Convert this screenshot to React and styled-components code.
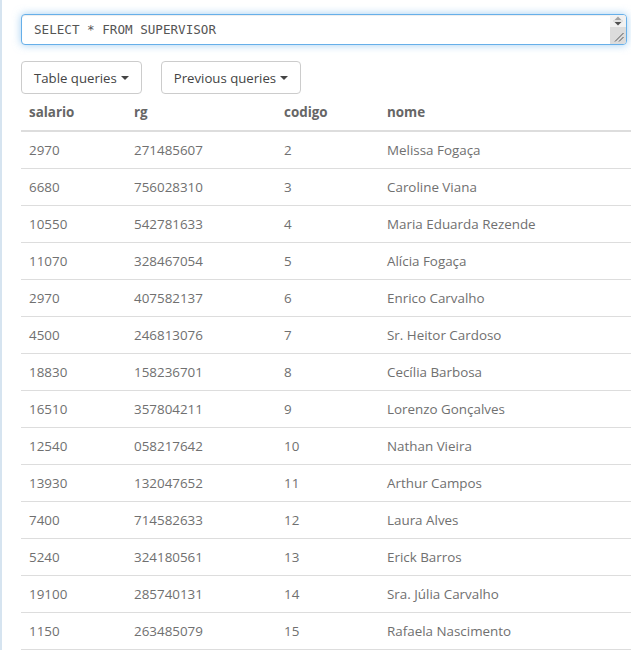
import styled, { createGlobalStyle } from "styled-components";

const GlobalStyle = createGlobalStyle`
  html, body {
    margin: 0;
    padding: 0;
    background: #fff;
    overflow: hidden;
  }
  body {
    font-family: "Open Sans", "DejaVu Sans", sans-serif;
    font-size: 13.4px;
    color: #6f6f6f;
  }
`;

/* 왼쪽 경계선이 있는 전체 영역 */
const Page = styled.div`
  min-height: 650px;
  border-left: 2px solid #d6e4f0;
  padding: 14px 0 0 19px;
  box-sizing: border-box;
`;

const Content = styled.div`
  width: 606px;
`;

const QueryWrap = styled.div`
  position: relative;
`;

/* SQL 입력창 */
const QueryBox = styled.textarea`
  display: block;
  width: 100%;
  height: 31px;
  box-sizing: border-box;
  padding: 5px 30px 5px 12px;
  font-family: "DejaVu Sans Mono", "Liberation Mono", monospace;
  font-size: 12.6px;
  line-height: 20px;
  color: #555;
  background: #fff;
  border: 1px solid #66afe9;
  border-radius: 4px;
  outline: none;
  box-shadow: inset 0 1px 1px rgba(0, 0, 0, 0.075),
    0 0 8px rgba(102, 175, 233, 0.6);
  overflow: hidden;
  resize: none;
`;

/* 스크롤바 모양 장식 */
const Gutter = styled.div`
  position: absolute;
  top: 1px;
  right: 1px;
  bottom: 1px;
  width: 16px;
  display: flex;
  flex-direction: column;
  border-radius: 0 3px 3px 0;
  overflow: hidden;
  pointer-events: none;
`;

const GutterTop = styled.div`
  height: 12px;
  background: #f1f1f1;
  display: flex;
  align-items: center;
  justify-content: center;
`;

const GutterBottom = styled.div`
  flex: 1;
  background: #dcdcdc;
  position: relative;
`;

const Toolbar = styled.div`
  display: flex;
  gap: 19px;
  margin-top: 16px;
`;

const DropButton = styled.button`
  display: flex;
  align-items: center;
  gap: 4px;
  height: 33px;
  padding: 0 12px;
  font-family: "Open Sans", "DejaVu Sans", sans-serif;
  font-size: 13.2px;
  color: #444;
  background: #fff;
  border: 1px solid #ccc;
  border-radius: 4px;
  cursor: pointer;
`;

const Caret = styled.span`
  display: inline-block;
  width: 0;
  height: 0;
  border-top: 4px solid #444;
  border-left: 4px solid transparent;
  border-right: 4px solid transparent;
`;

const Table = styled.table`
  width: 610px;
  border-collapse: collapse;
`;

const Th = styled.th`
  text-align: left;
  padding: 8px 8px;
  line-height: 20px;
  font-weight: 700;
  color: #666;
  border-bottom: 2px solid #ddd;
  width: ${(p) => p.$w || "auto"};
`;

const Td = styled.td`
  padding: 8px 8px;
  line-height: 20px;
  color: #707070;
  border-bottom: 1px solid #ddd;
`;

const columns = [
  { key: "salario", w: "89px" },
  { key: "rg", w: "134px" },
  { key: "codigo", w: "87px" },
  { key: "nome" },
];

const rows = [
  [2970, "271485607", 2, "Melissa Fogaça"],
  [6680, "756028310", 3, "Caroline Viana"],
  [10550, "542781633", 4, "Maria Eduarda Rezende"],
  [11070, "328467054", 5, "Alícia Fogaça"],
  [2970, "407582137", 6, "Enrico Carvalho"],
  [4500, "246813076", 7, "Sr. Heitor Cardoso"],
  [18830, "158236701", 8, "Cecília Barbosa"],
  [16510, "357804211", 9, "Lorenzo Gonçalves"],
  [12540, "058217642", 10, "Nathan Vieira"],
  [13930, "132047652", 11, "Arthur Campos"],
  [7400, "714582633", 12, "Laura Alves"],
  [5240, "324180561", 13, "Erick Barros"],
  [19100, "285740131", 14, "Sra. Júlia Carvalho"],
  [1150, "263485079", 15, "Rafaela Nascimento"],
];

function App() {
  return (
    <Page>
      <GlobalStyle />
      <Content>
        <QueryWrap>
          <QueryBox rows={1} defaultValue="SELECT * FROM SUPERVISOR" />
          <Gutter>
            <GutterTop>
              <svg width="10" height="10" viewBox="0 0 10 10">
                <path d="M5 0.5 L8.5 4 L1.5 4 Z" fill="#a3a3a3" />
                <rect x="0" y="4.5" width="10" height="1" fill="#cfcfcf" />
                <path d="M1.5 6 L8.5 6 L5 9.5 Z" fill="#505050" />
              </svg>
            </GutterTop>
            <GutterBottom>
              <svg
                width="10"
                height="10"
                viewBox="0 0 10 10"
                style={{ position: "absolute", right: 2, bottom: 2 }}
              >
                <path d="M9.5 1 L1 9.5 M9.5 5 L5 9.5" stroke="#555" strokeWidth="1" />
              </svg>
            </GutterBottom>
          </Gutter>
        </QueryWrap>
        <Toolbar>
          <DropButton>
            Table queries <Caret />
          </DropButton>
          <DropButton>
            Previous queries <Caret />
          </DropButton>
        </Toolbar>
        <Table>
          <thead>
            <tr>
              {columns.map((c) => (
                <Th key={c.key} $w={c.w}>
                  {c.key}
                </Th>
              ))}
            </tr>
          </thead>
          <tbody>
            {rows.map((r, i) => (
              <tr key={i}>
                {r.map((v, j) => (
                  <Td key={j}>{v}</Td>
                ))}
              </tr>
            ))}
          </tbody>
        </Table>
      </Content>
    </Page>
  );
}

export default App;
